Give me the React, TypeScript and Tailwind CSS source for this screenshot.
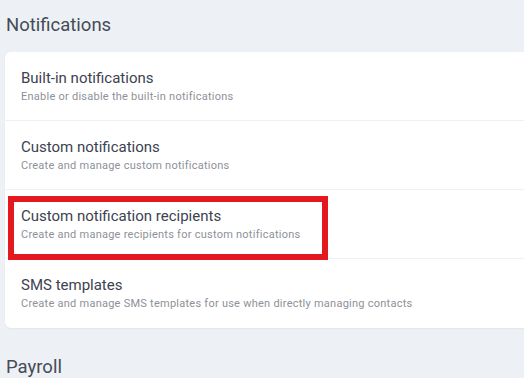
export default function App() {
  const rows = [
    { t: "Built-in notifications", s: "Enable or disable the built-in notifications" },
    { t: "Custom notifications", s: "Create and manage custom notifications" },
    { t: "Custom notification recipients", s: "Create and manage recipients for custom notifications", hl: true },
    { t: "SMS templates", s: "Create and manage SMS templates for use when directly managing contacts" },
  ];
  return (
    <div className="w-[524px] h-[378px] overflow-hidden bg-[#edf1f5]" style={{ fontFamily: "Roboto, sans-serif" }}>
      <div className="pl-[5px] pt-[12px]">
        <h2 className="pl-[1px] text-[18.5px] leading-[26px] text-[#454b57] font-normal">Notifications</h2>
        <div className="mt-[14px] w-[540px] bg-white rounded-[6px] shadow-[0_1px_2px_rgba(0,0,0,0.05)]">
          {rows.map((r, i) => (
            <div key={i} className={`relative h-[69px] pl-[16px] pt-[16px] ${i < 3 ? "border-b border-[#f0f1f3]" : ""}`}>
              {r.hl && (
                <div className="absolute left-[3px] top-[6px] w-[320px] h-[64px] border-[6px] border-[#e3191f]" />
              )}
              <div className="relative text-[15px] leading-[20px] text-[#3c4250]">{r.t}</div>
              <div className="relative text-[11px] leading-[15px] tracking-[0.25px] text-[#8d9199] mt-[1px]">{r.s}</div>
            </div>
          ))}
        </div>
        <h2 className="mt-[26px] pl-[1px] text-[18.5px] leading-[26px] text-[#454b57] font-normal">Payroll</h2>
      </div>
    </div>
  );
}
